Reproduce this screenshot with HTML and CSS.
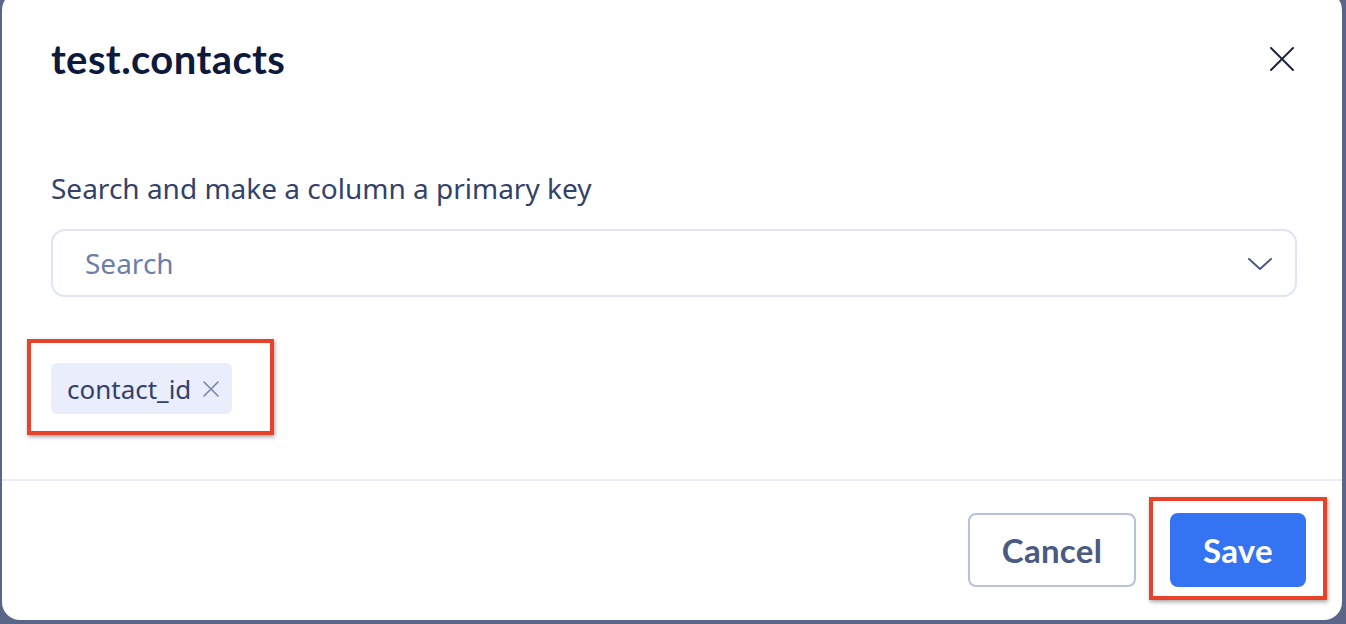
FILE: index.html
```html
<!DOCTYPE html>
<html>
<head>
<meta charset="utf-8">
<link rel="stylesheet" href="styles.css">
</head>
<body>
<div class="modal">
  <div class="modal-header">
    <h1 class="title">test.contacts</h1>
    <button class="close" aria-label="Close">
      <svg width="26" height="26" viewBox="0 0 26 26"><path d="M2 2 L24 24 M24 2 L2 24" stroke="#1d2540" stroke-width="2" stroke-linecap="round"/></svg>
    </button>
  </div>
  <div class="modal-body">
    <label class="field-label">Search and make a column a primary key</label>
    <div class="select">
      <span class="placeholder">Search</span>
      <svg class="chevron" width="26" height="16" viewBox="0 0 26 16"><path d="M2 3 L13 13 L24 3" fill="none" stroke="#4a5a80" stroke-width="2" stroke-linecap="round" stroke-linejoin="round"/></svg>
    </div>
    <div class="chips">
      <div class="chip-wrap">
        <span class="chip">contact_id
          <svg class="chip-x" width="18" height="18" viewBox="0 0 18 18"><path d="M2 2 L16 16 M16 2 L2 16" stroke="#7a86a8" stroke-width="1.6" stroke-linecap="round"/></svg>
        </span>
        <span class="annot annot-chip"></span>
      </div>
    </div>
  </div>
  <div class="modal-footer">
    <button class="btn btn-cancel">Cancel</button>
    <div class="save-wrap">
      <button class="btn btn-save">Save</button>
      <span class="annot annot-save"></span>
    </div>
  </div>
</div>
</body>
</html>
```

FILE: styles.css
```css
html, body {
  margin: 0;
  padding: 0;
  height: 100%;
  overflow: hidden;
}
body {
  background: #5a6587;
  padding: 0 4px 4px 2px;
  box-sizing: border-box;
}
.modal {
  margin-top: -8px;
  width: 1340px;
  height: 628px;
  background: #ffffff;
  border-radius: 18px;
  display: flex;
  flex-direction: column;
  box-sizing: border-box;
}
.modal-header {
  display: flex;
  align-items: center;
  justify-content: space-between;
  padding: 45px 47px 0 49px;
}
.title {
  margin: 0;
  font-family: "Lato", "Liberation Sans", sans-serif;
  font-weight: 700;
  font-size: 40px;
  line-height: 44px;
  color: #0e1a3c;
  letter-spacing: 0.4px;
}
.close {
  border: none;
  background: none;
  padding: 0;
  width: 26px;
  height: 26px;
  display: flex;
}
.modal-body {
  padding: 90px 45px 0 49px;
  display: flex;
  flex-direction: column;
}
.field-label {
  font-family: "Noto Sans", "Liberation Sans", sans-serif;
  font-size: 28px;
  line-height: 34px;
  color: #33426b;
}
.select {
  margin-top: 24px;
  height: 68px;
  border: 2px solid #dfe4f6;
  border-radius: 14px;
  box-sizing: border-box;
  display: flex;
  align-items: center;
  justify-content: space-between;
  padding: 0 22px 0 32px;
}
.placeholder {
  font-family: "Noto Sans", "Liberation Sans", sans-serif;
  font-size: 28px;
  color: #6d7fa8;
}
.chevron {
  margin-top: 2px;
}
.chips {
  margin-top: 66px;
  display: flex;
}
.chip-wrap {
  position: relative;
}
.chip {
  display: flex;
  align-items: center;
  gap: 11px;
  height: 51px;
  box-sizing: border-box;
  padding: 0 12px 0 16px;
  background: #eaedfb;
  border-radius: 6px;
  font-family: "Noto Sans", "Liberation Sans", sans-serif;
  font-size: 26px;
  color: #33416b;
}
.annot {
  position: absolute;
  border: 4px solid #e8432a;
  box-shadow: 1px 2px 4px rgba(0, 0, 0, 0.35);
  pointer-events: none;
}
.annot-chip {
  left: -24px;
  top: -24px;
  right: -42px;
  bottom: -21px;
}
.modal-footer {
  margin-top: 65px;
  border-top: 2px solid #ebeef9;
  display: flex;
  justify-content: flex-end;
  align-items: center;
  gap: 34px;
  padding: 32px 36px 0 0;
}
.btn {
  height: 74px;
  border-radius: 8px;
  font-family: "Lato", "Liberation Sans", sans-serif;
  font-weight: 700;
  font-size: 33px;
  box-sizing: border-box;
  cursor: pointer;
  letter-spacing: 0.3px;
}
.btn-cancel {
  width: 168px;
  background: #ffffff;
  border: 2px solid #b7c1d9;
  color: #4a5a80;
}
.save-wrap {
  position: relative;
}
.btn-save {
  width: 136px;
  background: #3473f2;
  border: none;
  color: #ffffff;
  display: block;
}
.annot-save {
  left: -21px;
  top: -16px;
  right: -21px;
  bottom: -13px;
}
```
